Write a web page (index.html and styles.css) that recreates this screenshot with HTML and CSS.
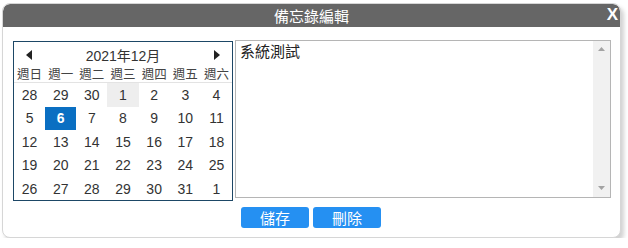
FILE: index.html
```html
<!DOCTYPE html>
<html lang="zh-Hant">
<head>
  <meta charset="UTF-8" />
  <title>備忘錄編輯</title>
  <link rel="stylesheet" href="styles.css">
</head>
<body>

  <div class="memo-dialog">
    <!-- 標題列 -->
    <div class="memo-title">
      <span>備忘錄編輯</span>
      <button class="close-btn" aria-label="關閉">X</button>
    </div>

    <div class="memo-body">
      <!-- 月曆 -->
      <div class="calendar">
        <div class="cal-head">
          <button class="cal-arrow" aria-label="上個月">
            <svg width="7" height="10" viewBox="0 0 7 10"><path d="M6 0 L0 5 L6 10 Z" fill="#222"/></svg>
          </button>
          <span class="cal-month">2021年12月</span>
          <button class="cal-arrow" aria-label="下個月">
            <svg width="7" height="10" viewBox="0 0 7 10"><path d="M1 0 L7 5 L1 10 Z" fill="#222"/></svg>
          </button>
        </div>
        <div class="cal-week">
          <span>週日</span><span>週一</span><span>週二</span><span>週三</span><span>週四</span><span>週五</span><span>週六</span>
        </div>
        <div class="cal-days">
          <span>28</span><span>29</span><span>30</span><span class="today">1</span><span>2</span><span>3</span><span>4</span>
          <span>5</span><span class="selected">6</span><span>7</span><span>8</span><span>9</span><span>10</span><span>11</span>
          <span>12</span><span>13</span><span>14</span><span>15</span><span>16</span><span>17</span><span>18</span>
          <span>19</span><span>20</span><span>21</span><span>22</span><span>23</span><span>24</span><span>25</span>
          <span>26</span><span>27</span><span>28</span><span>29</span><span>30</span><span>31</span><span>1</span>
        </div>
      </div>

      <!-- 內容 -->
      <div class="memo-right">
        <div class="memo-box">
          <textarea class="memo-text">系統測試</textarea>
          <div class="fake-scroll">
            <svg width="7" height="4" viewBox="0 0 7 4"><path d="M0 4 L3.5 0 L7 4 Z" fill="#a3a3a3"/></svg>
            <svg width="7" height="4" viewBox="0 0 7 4"><path d="M0 0 L3.5 4 L7 0 Z" fill="#a3a3a3"/></svg>
          </div>
        </div>
        <div class="memo-actions">
          <button class="act-btn">儲存</button>
          <button class="act-btn">刪除</button>
        </div>
      </div>
    </div>
  </div>

</body>
</html>
```

FILE: styles.css
```css
*{margin:0;padding:0;box-sizing:border-box}

body{
  background:#fff;
  font-family:"Liberation Sans","Noto Sans CJK TC",sans-serif;
  color:#333;
}

.memo-dialog{
  width:619px;height:235px;
  margin:3px 0 0 2px;
  border:1px solid #d6d6d6;border-radius:8px;
  box-shadow:3px 4px 4px rgba(0,0,0,.18);
  background:#fff;
  display:flex;flex-direction:column;
  overflow:hidden;
}

/* 標題列 */
.memo-title{
  height:23px;background:#666;color:#fff;
  display:flex;align-items:center;justify-content:center;
  font-size:15px;position:relative;
  border-radius:7px 7px 0 0;
}
.close-btn{
  position:absolute;right:2px;top:1px;
  background:none;border:none;color:#fff;
  font:bold 17px "Liberation Sans",sans-serif;
  cursor:pointer;
}

/* 內容區 */
.memo-body{
  display:flex;gap:2px;
  padding:13px 9px 0 10px;
}

/* 月曆 */
.calendar{
  width:220px;height:160px;margin-top:1px;
  border:1px solid #1d4766;
  font-size:14px;
}
.cal-head{
  height:24px;
  display:flex;align-items:center;justify-content:space-between;
  padding:2px 12px 0 12px;
}
.cal-arrow{background:none;border:none;display:flex;cursor:pointer}
.cal-month{font-size:14px;color:#333}
.cal-week{
  display:grid;grid-template-columns:repeat(7,1fr);
  height:17px;padding-top:2px;border-bottom:1px solid #e3e3e3;
  text-align:center;line-height:14px;color:#444;
  font-size:12.5px;
}
.cal-days{
  display:grid;grid-template-columns:repeat(7,1fr);
  grid-auto-rows:23.5px;
  text-align:center;
}
.cal-days span{display:flex;align-items:center;justify-content:center;cursor:pointer}
.cal-days .today{background:#eee}
.cal-days .selected{background:#0a6fc2;color:#fff;font-weight:bold}

/* 文字區 */
.memo-right{display:flex;flex-direction:column;flex:1}
.memo-box{
  width:376px;height:158px;
  border:1px solid #b5b5b5;
  display:flex;
}
.memo-text{
  flex:1;border:none;
  padding:0 4px;
  font:15px/20px "Noto Sans CJK TC",sans-serif;color:#222;
  resize:none;overflow:hidden;outline:none;
}
.fake-scroll{
  width:17px;background:#f1f1f1;
  display:flex;flex-direction:column;justify-content:space-between;align-items:center;
  padding:6px 0 7px;
}
.memo-actions{display:flex;gap:4px;padding:9px 0 0 6px}
.act-btn{
  width:68px;height:21px;
  background:#2590f2;border:none;border-radius:3px;
  color:#fff;font:15px "Noto Sans CJK TC",sans-serif;
  line-height:21px;cursor:pointer;
}
```
